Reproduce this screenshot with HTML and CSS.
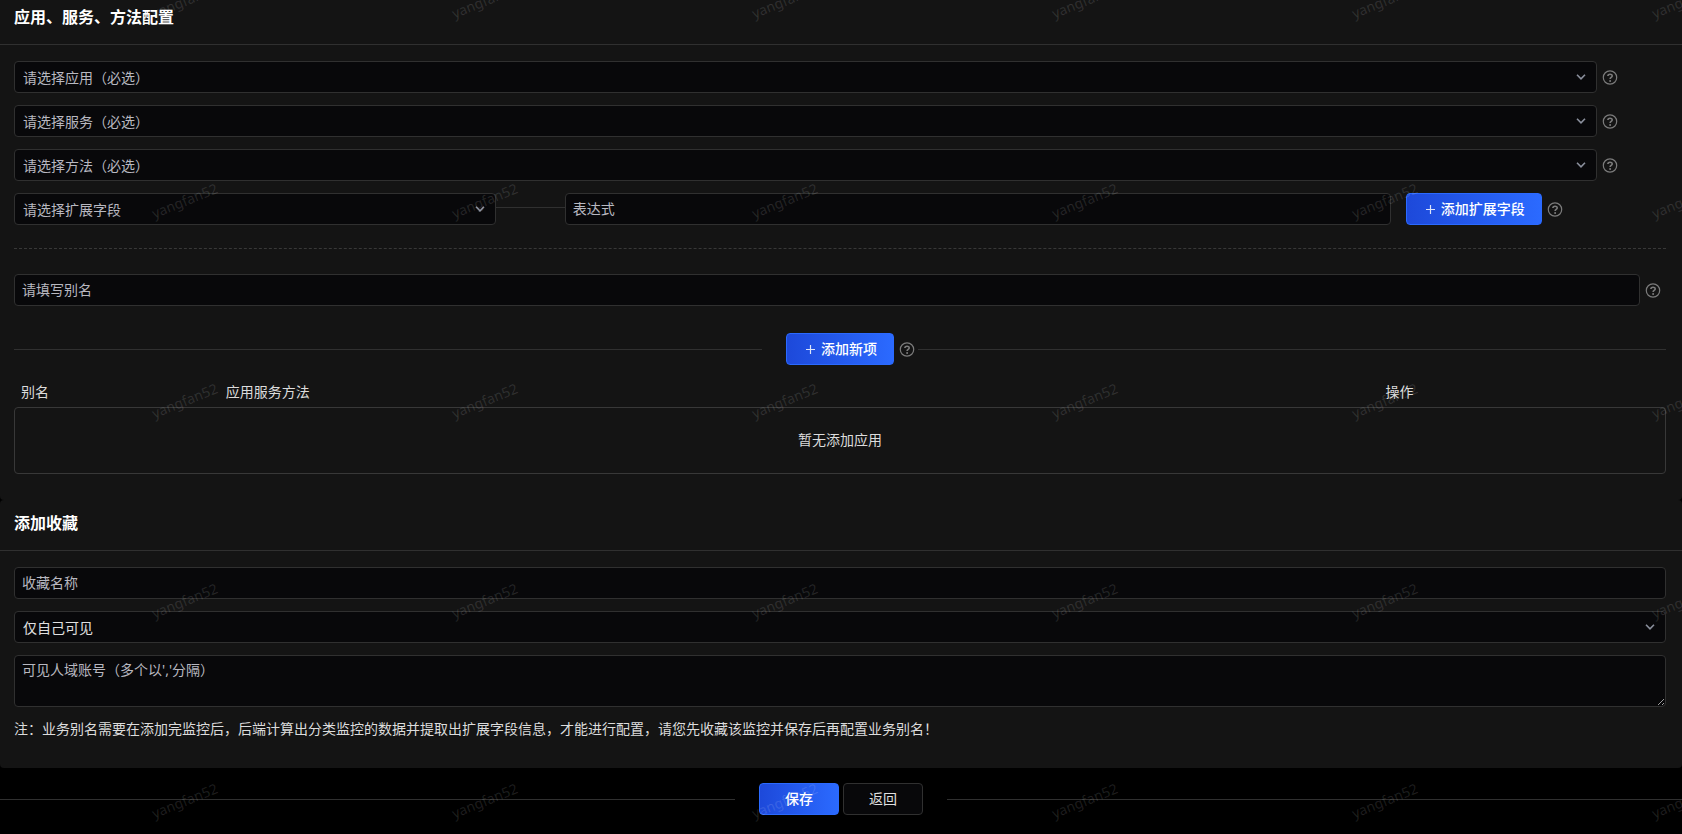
FILE: index.html
```html
<!DOCTYPE html>
<html lang="zh-CN">
<head>
<meta charset="utf-8">
<title>应用、服务、方法配置</title>
<link rel="stylesheet" href="styles.css">
</head>
<body>
<svg class="sprite" aria-hidden="true">
  <symbol id="help" viewBox="0 0 16 16">
    <circle cx="8" cy="8.5" r="6.7" fill="none" stroke="currentColor" stroke-width="1.2"/>
    <path d="M5.9 7.1c0-2.4 4.3-2.4 4.3-.1 0 1.4-2.1 1.4-2.1 3" fill="none" stroke="currentColor" stroke-width="1.6"/>
    <circle cx="8.1" cy="12" r="1" fill="currentColor"/>
  </symbol>
  <symbol id="chevron" viewBox="0 0 12 12">
    <path d="M2 3.8 6 7.8l4-4" fill="none" stroke="currentColor" stroke-width="1.6"/>
  </symbol>
  <symbol id="plus" viewBox="0 0 14 14">
    <path d="M7.5 3v9M3 7.5h9" fill="none" stroke="currentColor" stroke-width="1.2"/>
  </symbol>
</svg>

<main class="page">
  <section class="panel panel-first">
    <h2 class="panel-title">应用、服务、方法配置</h2>
    <div class="panel-body">
      <div class="field-list">
        <div class="row row-select">
          <div class="select"><select class="control placeholder" aria-label="应用"><option>请选择应用（必选）</option></select><svg class="chevron"><use href="#chevron"/></svg></div>
          <svg class="help"><use href="#help"/></svg>
        </div>
        <div class="row row-select">
          <div class="select"><select class="control placeholder" aria-label="服务"><option>请选择服务（必选）</option></select><svg class="chevron"><use href="#chevron"/></svg></div>
          <svg class="help"><use href="#help"/></svg>
        </div>
        <div class="row row-select">
          <div class="select"><select class="control placeholder" aria-label="方法"><option>请选择方法（必选）</option></select><svg class="chevron"><use href="#chevron"/></svg></div>
          <svg class="help"><use href="#help"/></svg>
        </div>
        <div class="row-extend">
          <div class="select"><select class="control placeholder" aria-label="扩展字段"><option>请选择扩展字段</option></select><svg class="chevron"><use href="#chevron"/></svg></div>
          <span class="link-line"></span>
          <input class="control" type="text" placeholder="表达式" aria-label="表达式">
          <div class="row extend-action">
            <button class="btn btn-primary" type="button"><svg class="plus"><use href="#plus"/></svg>添加扩展字段</button>
            <svg class="help"><use href="#help"/></svg>
          </div>
        </div>
      </div>
      <hr class="dashed">
      <div class="row row-alias">
        <input class="control" type="text" placeholder="请填写别名" aria-label="别名">
        <svg class="help"><use href="#help"/></svg>
      </div>
      <div class="split split-add">
        <span class="split-line"></span>
        <div class="row add-action">
          <button class="btn btn-primary" type="button"><svg class="plus"><use href="#plus"/></svg>添加新项</button>
          <svg class="help"><use href="#help"/></svg>
        </div>
        <span class="split-line"></span>
      </div>
      <table class="app-table">
        <thead>
          <tr><th class="col-alias">别名</th><th class="col-method">应用服务方法</th><th>操作</th></tr>
        </thead>
        <tbody>
          <tr><td colspan="3">暂无添加应用</td></tr>
        </tbody>
      </table>
    </div>
  </section>

  <section class="panel">
    <h2 class="panel-title panel-title-second">添加收藏</h2>
    <div class="panel-body panel-body-last">
      <div class="field-list">
        <input class="control" type="text" placeholder="收藏名称" aria-label="收藏名称">
        <div class="select"><select class="control" aria-label="可见范围"><option>仅自己可见</option></select><svg class="chevron"><use href="#chevron"/></svg></div>
        <textarea class="control area" placeholder="可见人域账号（多个以','分隔）" aria-label="可见人域账号"></textarea>
      </div>
      <p class="note">注：业务别名需要在添加完监控后，后端计算出分类监控的数据并提取出扩展字段信息，才能进行配置，请您先收藏该监控并保存后再配置业务别名！</p>
    </div>
  </section>

  <footer class="split split-footer">
    <span class="split-line"></span>
    <div class="footer-actions">
      <button class="btn btn-primary btn-wide" type="button">保存</button>
      <button class="btn btn-default btn-wide" type="button">返回</button>
    </div>
    <span class="split-line"></span>
  </footer>
</main>

<div class="watermark" aria-hidden="true">
  <span>yangfan52</span><span>yangfan52</span><span>yangfan52</span><span>yangfan52</span><span>yangfan52</span><span>yangfan52</span>
  <span>yangfan52</span><span>yangfan52</span><span>yangfan52</span><span>yangfan52</span><span>yangfan52</span><span>yangfan52</span>
  <span>yangfan52</span><span>yangfan52</span><span>yangfan52</span><span>yangfan52</span><span>yangfan52</span><span>yangfan52</span>
  <span>yangfan52</span><span>yangfan52</span><span>yangfan52</span><span>yangfan52</span><span>yangfan52</span><span>yangfan52</span>
  <span>yangfan52</span><span>yangfan52</span><span>yangfan52</span><span>yangfan52</span><span>yangfan52</span><span>yangfan52</span>
</div>
</body>
</html>
```
FILE: styles.css
```css
* { box-sizing: border-box; }

body {
  margin: 0;
  background: #000;
  color: #dcdcdc;
  font: 14px/22px "Noto Sans", "Noto Sans CJK SC", sans-serif;
}

.sprite { display: none; }

.panel {
  background: #141414;
  border-radius: 4px;
}

.panel-first { border-radius: 0 0 4px 4px; }

.panel-title {
  margin: 0;
  padding: 5px 14px 15px;
  border-bottom: 1px solid #303030;
  color: #fff;
  font-size: 16px;
  line-height: 24px;
  font-weight: 700;
}

.panel-title-second { padding: 11px 14px 15px; }

.panel-body { padding: 16px 16px 26px 14px; }

.panel-body-last { padding-bottom: 28px; }

.field-list {
  display: flex;
  flex-direction: column;
  gap: 12px;
}

.row {
  display: flex;
  align-items: center;
  gap: 5px;
}

.row-select { padding-right: 48px; }
.row-alias { padding-right: 5px; }

.row-extend {
  display: grid;
  grid-template-columns: 7fr 1fr 12fr 4fr;
  align-items: center;
}

.extend-action { padding-left: 15px; }

.link-line { height: 1px; margin-bottom: 3px; background: #303030; }

.select {
  position: relative;
  display: flex;
  flex: 1;
}

.control {
  width: 100%;
  min-width: 0;
  height: 32px;
  margin: 0;
  padding: 0 7px 1px;
  border: 1px solid #303030;
  border-radius: 4px;
  background: #08080a;
  color: #e0e0e0;
  font: inherit;
  outline: none;
}

select.control {
  appearance: none;
  padding: 0 28px 0 8px;
  font-family: "Noto Sans CJK SC", sans-serif;
}

.placeholder { color: #b8b8c0; }
.control::placeholder { color: #b8b8c0; opacity: 1; }

.area {
  display: block;
  height: 52px;
  padding: 3px 7px;
  resize: vertical;
}

.chevron {
  position: absolute;
  top: 10px;
  right: 10px;
  width: 12px;
  height: 12px;
  color: #8a8f9c;
  pointer-events: none;
}

.help {
  flex: none;
  width: 16px;
  height: 16px;
  color: #7c7c7c;
}

.plus { width: 14px; height: 14px; opacity: .85; }

.btn {
  display: inline-flex;
  flex: none;
  align-items: center;
  justify-content: center;
  gap: 4px;
  height: 32px;
  padding: 0 16px;
  border: 1px solid #2b6aff;
  border-radius: 4px;
  font: inherit;
  white-space: nowrap;
}

.btn-primary {
  background: linear-gradient(90deg, #1d49da, #2b6aff);
  color: #fff;
  font-weight: 500;
}

.btn-default {
  border-color: #303030;
  background: #08080a;
  color: #e0e0e0;
}

.btn-wide { width: 80px; }

.dashed {
  margin: 23px 0 25px;
  border: 0;
  border-top: 1px dashed #383838;
}

.split { display: flex; align-items: center; }

.split-line {
  flex: 1;
  height: 1px;
  background: #303030;
}

.split-add { margin-top: 27px; }

.add-action { padding: 0 3px 0 24px; }

.app-table {
  width: 100%;
  margin-top: 16px;
  border-spacing: 0;
  table-layout: fixed;
}

.app-table th {
  padding: 0 7px 4px;
  text-align: left;
  font-weight: 400;
}

.col-alias { width: 12.4%; }
.col-method { width: 70.2%; }

.app-table td {
  height: 67px;
  padding: 0 0 2px;
  border: 1px solid #383838;
  border-radius: 4px;
  text-align: center;
}

.note { margin: 11px 0 0; }

.split-footer { padding: 15px 0 19px; }

.footer-actions {
  display: flex;
  gap: 4px;
  padding: 0 24px;
}

.watermark {
  position: absolute;
  inset: 0;
  display: grid;
  grid-template-columns: repeat(6, 300px);
  grid-auto-rows: 200px;
  padding-left: 35px;
  overflow: hidden;
  color: rgba(255, 255, 255, .12);
  font: 14px/20px "Noto Sans", sans-serif;
  pointer-events: none;
}

.watermark span {
  place-self: center;
  transform: translateY(-99px) rotate(-22deg);
}
```
